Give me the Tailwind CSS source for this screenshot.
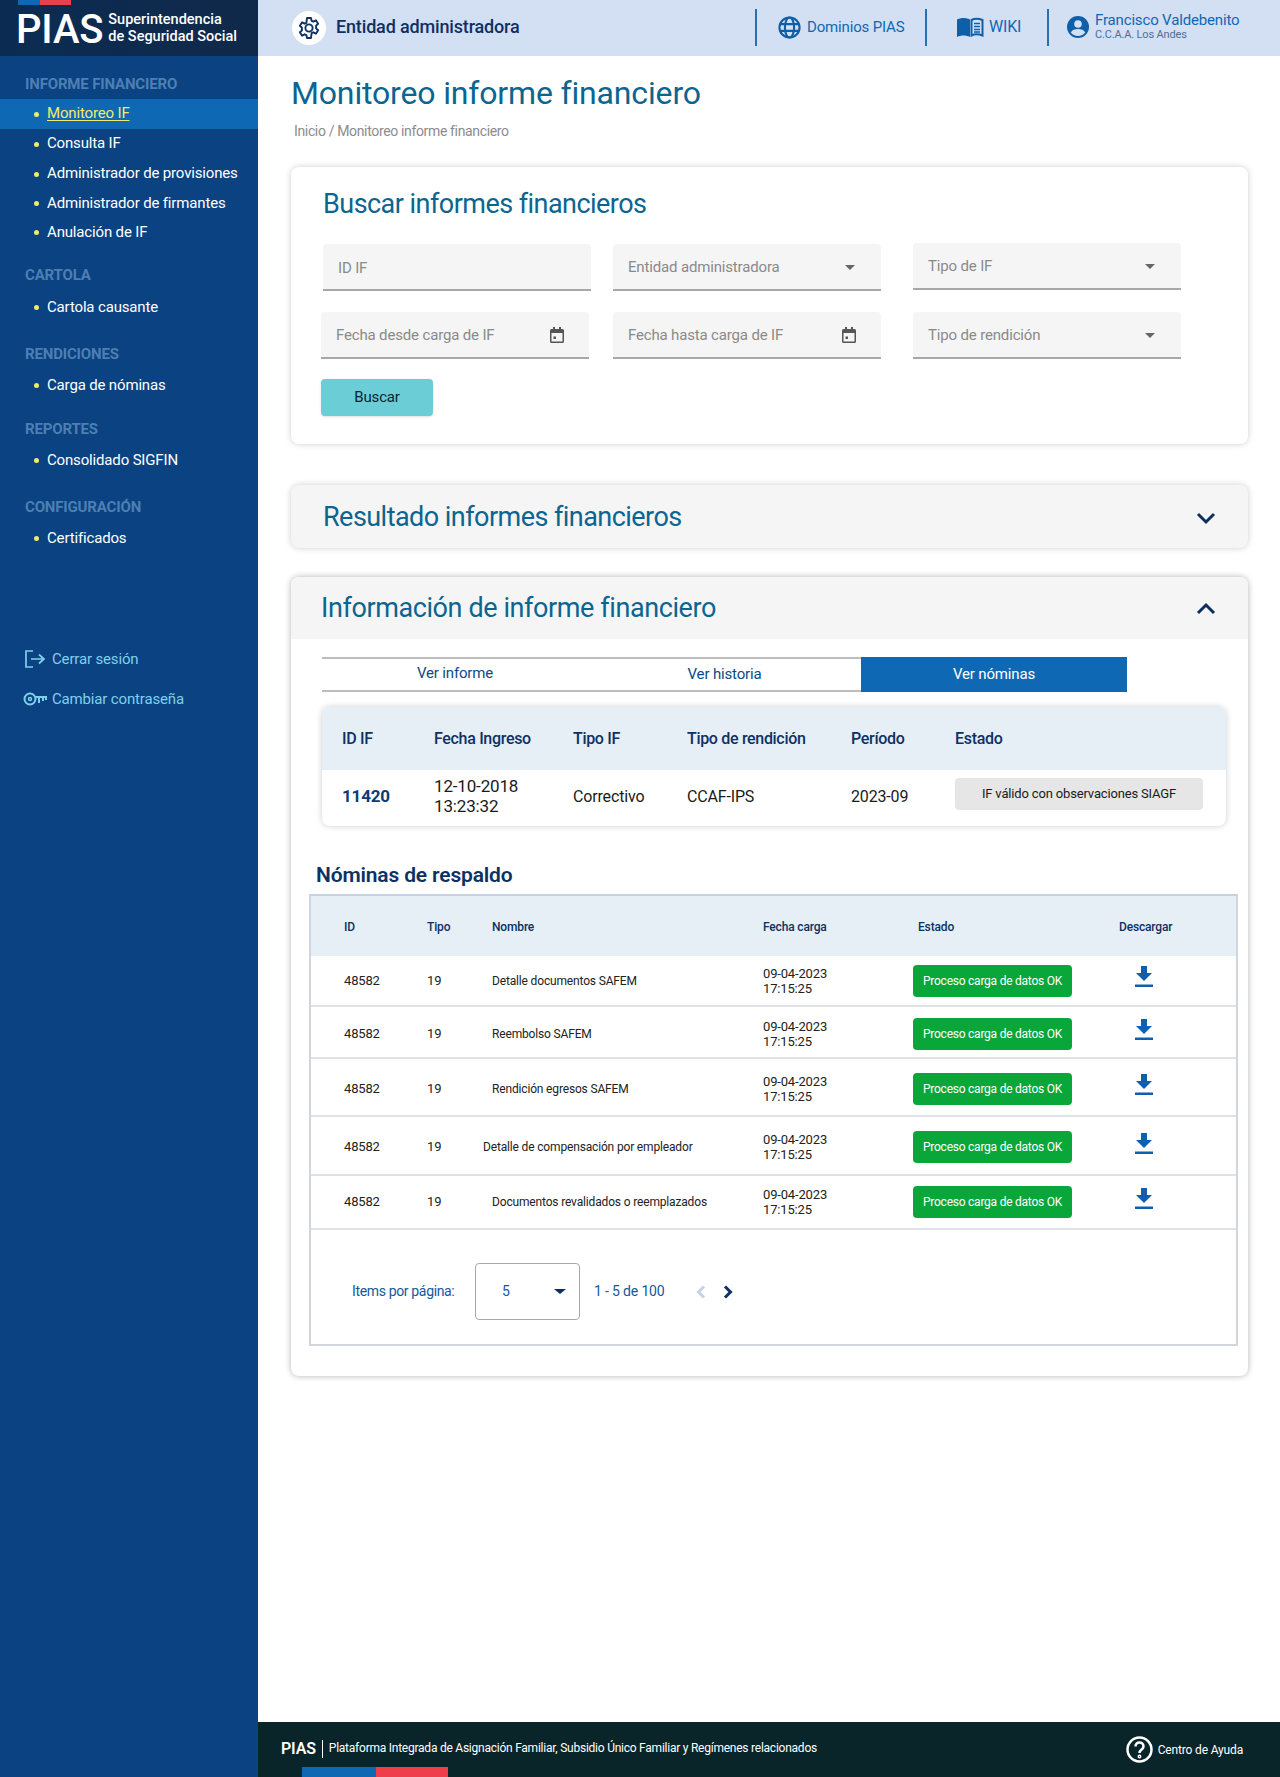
<!DOCTYPE html>
<html lang="es">
<head>
<meta charset="utf-8">
<title>PIAS</title>
<script src="https://cdn.jsdelivr.net/npm/@tailwindcss/browser@4"></script>
</head>
<body class="font-['Roboto',sans-serif] bg-white">
<div class="flex w-[1280px] h-[1777px] tracking-[-0.01em]">
  <aside class="w-[258px] shrink-0 bg-[#0a4282] flex flex-col text-white">
    <div class="relative h-[56px] bg-gradient-to-r from-[#0b2c52] to-[#10294a] flex items-center pl-[16px] gap-[5px]">
      <div class="absolute left-[18px] top-0 flex h-[5px]"><div class="w-[22px] bg-[#0f68b4]"></div><div class="w-[31px] bg-[#e8414c]"></div></div>
      <span class="text-[40px] font-medium leading-none mt-[3px]">PIAS</span>
      <div class="text-[14.5px] font-medium leading-[17px] -mt-[1px] tracking-normal"><div>Superintendencia</div><div>de Seguridad Social</div></div>
    </div>
    <div class="h-[28px] mt-[14px] pl-[25px] flex items-center text-[15px] font-bold text-[#4d7fb3]">INFORME FINANCIERO</div>
    <div class="h-[30px] mt-[1px] bg-[#0f68b4] flex items-center pl-[34px] gap-[8px] text-[15px] text-[#f2ea6d]"><span class="w-[5px] h-[5px] rounded-full bg-[#f2ea6d]"></span><span class="underline underline-offset-2 -mt-[1px]">Monitoreo IF</span></div>
    <div class="h-[30px] flex items-center pl-[34px] gap-[8px] text-[15px]"><span class="w-[5px] h-[5px] rounded-full bg-[#f2ea6d]"></span><span class="-mt-[1px]">Consulta IF</span></div>
    <div class="h-[30px] flex items-center pl-[34px] gap-[8px] text-[15px]"><span class="w-[5px] h-[5px] rounded-full bg-[#f2ea6d]"></span><span class="-mt-[1px]">Administrador de provisiones</span></div>
    <div class="h-[29px] flex items-center pl-[34px] gap-[8px] text-[15px]"><span class="w-[5px] h-[5px] rounded-full bg-[#f2ea6d]"></span><span class="-mt-[1px]">Administrador de firmantes</span></div>
    <div class="h-[29px] flex items-center pl-[34px] gap-[8px] text-[15px]"><span class="w-[5px] h-[5px] rounded-full bg-[#f2ea6d]"></span><span class="-mt-[1px]">Anulación de IF</span></div>
    <div class="h-[28px] mt-[14px] pl-[25px] flex items-center text-[15px] font-bold text-[#4d7fb3]">CARTOLA</div>
    <div class="h-[30px] mt-[3px] flex items-center pl-[34px] gap-[8px] text-[15px]"><span class="w-[5px] h-[5px] rounded-full bg-[#f2ea6d]"></span>Cartola causante</div>
    <div class="h-[28px] mt-[18px] pl-[25px] flex items-center text-[15px] font-bold text-[#4d7fb3]">RENDICIONES</div>
    <div class="h-[30px] mt-[2px] flex items-center pl-[34px] gap-[8px] text-[15px]"><span class="w-[5px] h-[5px] rounded-full bg-[#f2ea6d]"></span>Carga de nóminas</div>
    <div class="h-[28px] mt-[15px] pl-[25px] flex items-center text-[15px] font-bold text-[#4d7fb3]">REPORTES</div>
    <div class="h-[30px] mt-[2px] flex items-center pl-[34px] gap-[8px] text-[15px]"><span class="w-[5px] h-[5px] rounded-full bg-[#f2ea6d]"></span>Consolidado SIGFIN</div>
    <div class="h-[28px] mt-[18px] pl-[25px] flex items-center text-[15px] font-bold text-[#4d7fb3]">CONFIGURACIÓN</div>
    <div class="h-[30px] mt-[2px] flex items-center pl-[34px] gap-[8px] text-[15px]"><span class="w-[5px] h-[5px] rounded-full bg-[#f2ea6d]"></span>Certificados</div>
    <div class="h-[30px] mt-[91px] flex items-center pl-[24px] gap-[6px] text-[15px] text-[#7fd0ea]">
      <svg class="w-[22px] h-[20px]" viewBox="0 0 22 20" fill="none" stroke="#7fd0ea" stroke-width="1.700"><path d="M9 2H2v16h7M7 10h13M15 5.500l5 4.500-5 4.500"/></svg>
      <span>Cerrar sesión</span>
    </div>
    <div class="h-[30px] mt-[10px] flex items-center pl-[23px] gap-[5px] text-[15px] text-[#7fd0ea]">
      <svg class="w-[24px] h-[16px]" viewBox="0 0 24 16" fill="none" stroke="#7fd0ea" stroke-width="2"><circle cx="7" cy="8" r="5.500"/><circle cx="7" cy="8" r="1.500" stroke-width="1.500"/><path d="M12.500 6H23v3M16 6v6M20 6v4"/></svg>
      <span>Cambiar contraseña</span>
    </div>
  </aside>

  <div class="flex-1 flex flex-col min-w-0">
    <header class="h-[56px] bg-[#d3dff2] flex items-center pl-[34px] shrink-0">
      <div class="-mt-[1px] w-[34px] h-[34px] rounded-full bg-white flex items-center justify-center">
        <svg class="w-[24px] h-[24px]" viewBox="0 0 24 24" fill="none" stroke="#0d3163" stroke-width="1.900" stroke-linejoin="round"><path d="M10 2h4l.6 2.900 1.700.8 2.600-1.400 2.200 3.400-2 1.900v2.800l2 1.900-2.200 3.400-2.600-1.400-1.700.8L14 22h-4l-.6-2.900-1.700-.8-2.600 1.400-2.200-3.400 2-1.900V11.600l-2-1.900L5.100 6.300l2.600 1.400 1.700-.8z"/><circle cx="12" cy="12" r="3.600"/></svg>
      </div>
      <span class="-mt-[4px] ml-[10px] text-[18px] font-medium text-[#0d3163]">Entidad administradora</span>
      <div class="ml-auto flex items-center h-full">
        <div class="w-[2px] h-[37px] -mt-[1px] bg-[#2a6fae]"></div>
        <div class="-mt-[2px] w-[168px] flex items-center pl-[21px] gap-[6px] text-[#0f68b4] text-[15px]">
          <svg class="w-[23px] h-[23px]" viewBox="0 0 24 24" fill="none" stroke="#0f5fa8" stroke-width="2.200"><circle cx="12" cy="12" r="10.500"/><ellipse cx="12" cy="12" rx="4.800" ry="10.500"/><path d="M2 8.500h20M2 15.500h20"/></svg>
          <span>Dominios PIAS</span>
        </div>
        <div class="w-[2px] h-[37px] -mt-[1px] bg-[#2a6fae]"></div>
        <div class="-mt-[2px] w-[120px] flex items-center pl-[30px] gap-[5px] text-[#0f68b4] text-[16px]">
          <svg class="w-[27px] h-[21px]" viewBox="0 0 27 21"><path fill="#0f5fa8" d="M0 2.500C4 .5 9 .5 13 2.500V20C9 18 4 18 0 20z"/><path fill="none" stroke="#0f5fa8" stroke-width="2" d="M14.500 3c3-1.500 7-1.500 11 0v15.500c-4-1.500-8-1.500-11 0z"/><path stroke="#0f5fa8" stroke-width="1.400" d="M17 6.500h6M17 9.500h6M17 12.500h6M17 15h6"/></svg>
          <span>WIKI</span>
        </div>
        <div class="w-[2px] h-[37px] -mt-[1px] bg-[#2a6fae]"></div>
        <div class="-mt-[2px] w-[231px] flex items-center pl-[18px] gap-[6px] text-[#0f68b4]">
          <svg class="w-[22px] h-[22px] shrink-0" viewBox="0 0 22 22"><circle cx="11" cy="11" r="11" fill="#0f5fa8"/><circle cx="11" cy="8" r="3.800" fill="#d3dff2"/><path fill="#d3dff2" d="M3.800 16.500c1.500-2.800 4-3.500 7.200-3.500s5.700.7 7.200 3.500C16.500 18.800 14 20 11 20s-5.500-1.200-7.200-3.500z"/></svg>
          <div class="leading-none -mt-[2px]"><div class="text-[15px] leading-[17px]">Francisco Valdebenito</div><div class="text-[11px] leading-[11px] text-[#4d6f98]">C.C.A.A. Los Andes</div></div>
        </div>
      </div>
    </header>

    <main class="flex-1 pl-[33px] pr-[32px] min-h-0">
      <h1 class="text-[32px] leading-[44px] mt-[15px] text-[#0b6590]">Monitoreo informe financiero</h1>
      <p class="text-[14px] tracking-[-0.025em] leading-[20px] mt-[6px] ml-[3px] text-[#8c8c8c]">Inicio / Monitoreo informe financiero</p>

      <section class="mt-[26px] h-[277px] bg-white rounded-lg shadow-[0_0_6px_rgba(0,0,0,0.2)] pt-[19px] pl-[30px]">
        <h2 class="ml-[2px] text-[27px] tracking-[-0.02em] leading-[36px] text-[#0b6590]">Buscar informes financieros</h2>
        <div class="mt-[22px] flex items-start">
          <div class="ml-[2px] w-[268px] h-[47px] bg-[#f5f5f5] border-b-2 border-[#a8a8a8] rounded-t flex items-center pt-[3px] px-[15px] text-[15px] text-[#8a8a8a]">ID IF</div>
          <div class="ml-[22px] w-[268px] h-[47px] bg-[#f5f5f5] border-b-2 border-[#a8a8a8] rounded-t flex items-center justify-between pt-[1px] pl-[15px] pr-[26px] text-[15px] text-[#8a8a8a]">Entidad administradora<span class="w-0 h-0 border-x-[5px] border-x-transparent border-t-[5px] border-t-[#666]"></span></div>
          <div class="ml-[32px] -mt-[1px] w-[268px] h-[47px] bg-[#f5f5f5] border-b-2 border-[#a8a8a8] rounded-t flex items-center justify-between pt-[1px] pl-[15px] pr-[26px] text-[15px] text-[#8a8a8a]">Tipo de IF<span class="w-0 h-0 border-x-[5px] border-x-transparent border-t-[5px] border-t-[#666]"></span></div>
        </div>
        <div class="mt-[21px] flex items-start">
          <div class="w-[268px] h-[47px] bg-[#f5f5f5] border-b-2 border-[#a8a8a8] rounded-t flex items-center justify-between pt-[1px] pl-[15px] pr-[25px] text-[15px] text-[#8a8a8a]">Fecha desde carga de IF
            <svg class="w-[14px] h-[16px]" viewBox="0 0 14 16"><path fill="#555" d="M3 0h2v2h4V0h2v2h1.500A1.500 1.500 0 0 1 14 3.500v11a1.500 1.500 0 0 1-1.500 1.500h-11A1.500 1.500 0 0 1 0 14.500v-11A1.500 1.500 0 0 1 1.500 2H3zM1.500 6v8.500h11V6z"/><rect x="3.500" y="9.500" width="2.500" height="2.500" fill="#555"/></svg>
          </div>
          <div class="ml-[24px] w-[268px] h-[47px] bg-[#f5f5f5] border-b-2 border-[#a8a8a8] rounded-t flex items-center justify-between pt-[1px] pl-[15px] pr-[25px] text-[15px] text-[#8a8a8a]">Fecha hasta carga de IF
            <svg class="w-[14px] h-[16px]" viewBox="0 0 14 16"><path fill="#555" d="M3 0h2v2h4V0h2v2h1.500A1.500 1.500 0 0 1 14 3.500v11a1.500 1.500 0 0 1-1.500 1.500h-11A1.500 1.500 0 0 1 0 14.500v-11A1.500 1.500 0 0 1 1.500 2H3zM1.500 6v8.500h11V6z"/><rect x="3.500" y="9.500" width="2.500" height="2.500" fill="#555"/></svg>
          </div>
          <div class="ml-[32px] w-[268px] h-[47px] bg-[#f5f5f5] border-b-2 border-[#a8a8a8] rounded-t flex items-center justify-between pt-[1px] pl-[15px] pr-[26px] text-[15px] text-[#8a8a8a]">Tipo de rendición<span class="w-0 h-0 border-x-[5px] border-x-transparent border-t-[5px] border-t-[#666]"></span></div>
        </div>
        <button class="mt-[20px] w-[112px] h-[37px] rounded bg-[#6bcdd6] text-[15px] text-[#0b1f33] shadow-sm">Buscar</button>
      </section>

      <section class="mt-[41px] h-[63px] bg-[#f5f5f5] rounded-lg shadow-[0_0_6px_rgba(0,0,0,0.2)] flex items-center justify-between pl-[32px] pr-[32px]">
        <h2 class="text-[27px] tracking-[-0.02em] leading-[36px] text-[#0b6590]">Resultado informes financieros</h2>
        <svg class="w-[20px] h-[13px] mt-[4px]" viewBox="0 0 20 13" fill="none" stroke="#0d2f5c" stroke-width="3"><path d="M2 2l8 8 8-8"/></svg>
      </section>

      <section class="mt-[29px] h-[799px] bg-white rounded-lg shadow-[0_0_6px_rgba(0,0,0,0.3)]">
        <div class="h-[62px] bg-[#f5f5f5] rounded-t-lg flex items-center justify-between pl-[30px] pr-[32px]">
          <h2 class="text-[27px] tracking-[-0.015em] leading-[36px] text-[#0b6590]">Información de informe financiero</h2>
          <svg class="w-[20px] h-[13px]" viewBox="0 0 20 13" fill="none" stroke="#0d2f5c" stroke-width="3"><path d="M2 11l8-8 8 8"/></svg>
        </div>

        <div class="mt-[18px] ml-[31px] w-[805px] h-[35px] flex text-[15px] text-[#0d4a85]">
          <div class="w-[266px] flex items-center justify-center border-y-2 border-[#bdbdbd]"><span class="-mt-[2px]">Ver informe</span></div>
          <div class="w-[273px] flex items-center justify-center border-y-2 border-[#bdbdbd]">Ver historia</div>
          <div class="w-[266px] flex items-center justify-center bg-[#0f68b4] text-white">Ver nóminas</div>
        </div>

        <div class="mt-[15px] ml-[31px] w-[904px] h-[119px] rounded-lg shadow-[0_0_6px_rgba(0,0,0,0.2)] overflow-hidden">
          <div class="h-[63px] bg-[#e6eef6] grid grid-cols-[112px_139px_114px_164px_104px_1fr] items-center text-[16px] tracking-[-0.02em] font-medium text-[#0d3163]">
            <div class="pl-[20px]">ID IF</div><div>Fecha Ingreso</div><div>Tipo IF</div><div>Tipo de rendición</div><div>Período</div><div>Estado</div>
          </div>
          <div class="h-[56px] pb-[2px] grid grid-cols-[112px_139px_114px_164px_104px_1fr] items-center text-[16px] text-[#1a1a1a]">
            <div class="pl-[20px] text-[17px] font-bold text-[#0e3a78]">11420</div>
            <div class="text-[17px] leading-[20px] -mt-[2px]">12-10-2018<br>13:23:32</div>
            <div>Correctivo</div><div>CCAF-IPS</div><div>2023-09</div>
            <div class="w-[248px] h-[32px] -mt-[6px] rounded bg-[#e6e6e6] flex items-center justify-center text-[13px]">IF válido con observaciones SIAGF</div>
          </div>
        </div>

        <h3 class="mt-[35px] ml-[25px] text-[21px] leading-[28px] font-semibold text-[#0d3163]">Nóminas de respaldo</h3>

        <div class="mt-[5px] ml-[18px] w-[929px] h-[452px] border-2 border-[#d0d6dc] border-t-[#c5d3e0]">
          <div class="h-[60px] pt-[1px] bg-[#e6eef6] grid grid-cols-[116px_65px_271px_150px_206px_1fr] items-center text-[12px] font-medium text-[#0d3163]">
            <div class="pl-[33px]">ID</div><div>Tipo</div><div>Nombre</div><div>Fecha carga</div><div class="pl-[5px]">Estado</div><div>Descargar</div>
          </div>

          <div class="h-[51px] border-b-2 border-[#dfe3e6] grid grid-cols-[116px_65px_271px_150px_206px_1fr] items-center text-[12px] text-[#222]">
            <div class="pl-[33px] text-[13px]">48582</div><div class="text-[13px]">19</div><div>Detalle documentos SAFEM</div><div class="text-[13px] leading-[15px]">09-04-2023<br>17:15:25</div>
            <div class="w-[159px] h-[32px] rounded bg-[#09a63a] text-white tracking-[-0.02em] flex items-center justify-center">Proceso carga de datos OK</div>
            <svg class="ml-[16px] -mt-[8px] w-[18px] h-[21px]" viewBox="0 0 18 21"><path fill="#0f5fb0" d="M6 0h6v7h5l-8 8-8-8h5z"/><rect y="18.500" width="18" height="2.500" fill="#0f5fb0"/></svg>
          </div>
          <div class="h-[52px] pt-[3px] border-b-2 border-[#dfe3e6] grid grid-cols-[116px_65px_271px_150px_206px_1fr] items-center text-[12px] text-[#222]">
            <div class="pl-[33px] text-[13px]">48582</div><div class="text-[13px]">19</div><div>Reembolso SAFEM</div><div class="text-[13px] leading-[15px]">09-04-2023<br>17:15:25</div>
            <div class="w-[159px] h-[32px] rounded bg-[#09a63a] text-white tracking-[-0.02em] flex items-center justify-center">Proceso carga de datos OK</div>
            <svg class="ml-[16px] -mt-[8px] w-[18px] h-[21px]" viewBox="0 0 18 21"><path fill="#0f5fb0" d="M6 0h6v7h5l-8 8-8-8h5z"/><rect y="18.500" width="18" height="2.500" fill="#0f5fb0"/></svg>
          </div>
          <div class="h-[58px] pt-[3px] border-b-2 border-[#dfe3e6] grid grid-cols-[116px_65px_271px_150px_206px_1fr] items-center text-[12px] text-[#222]">
            <div class="pl-[33px] text-[13px]">48582</div><div class="text-[13px]">19</div><div>Rendición egresos SAFEM</div><div class="text-[13px] leading-[15px]">09-04-2023<br>17:15:25</div>
            <div class="w-[159px] h-[32px] rounded bg-[#09a63a] text-white tracking-[-0.02em] flex items-center justify-center">Proceso carga de datos OK</div>
            <svg class="ml-[16px] -mt-[8px] w-[18px] h-[21px]" viewBox="0 0 18 21"><path fill="#0f5fb0" d="M6 0h6v7h5l-8 8-8-8h5z"/><rect y="18.500" width="18" height="2.500" fill="#0f5fb0"/></svg>
          </div>
          <div class="h-[59px] pt-[3px] border-b-2 border-[#dfe3e6] grid grid-cols-[116px_65px_271px_150px_206px_1fr] items-center text-[12px] text-[#222]">
            <div class="pl-[33px] text-[13px]">48582</div><div class="text-[13px]">19</div><div class="-ml-[9px]">Detalle de compensación por empleador</div><div class="text-[13px] leading-[15px]">09-04-2023<br>17:15:25</div>
            <div class="w-[159px] h-[32px] rounded bg-[#09a63a] text-white tracking-[-0.02em] flex items-center justify-center">Proceso carga de datos OK</div>
            <svg class="ml-[16px] -mt-[8px] w-[18px] h-[21px]" viewBox="0 0 18 21"><path fill="#0f5fb0" d="M6 0h6v7h5l-8 8-8-8h5z"/><rect y="18.500" width="18" height="2.500" fill="#0f5fb0"/></svg>
          </div>
          <div class="h-[54px] border-b-2 border-[#dfe3e6] grid grid-cols-[116px_65px_271px_150px_206px_1fr] items-center text-[12px] text-[#222]">
            <div class="pl-[33px] text-[13px]">48582</div><div class="text-[13px]">19</div><div>Documentos revalidados o reemplazados</div><div class="text-[13px] leading-[15px]">09-04-2023<br>17:15:25</div>
            <div class="w-[159px] h-[32px] rounded bg-[#09a63a] text-white tracking-[-0.02em] flex items-center justify-center">Proceso carga de datos OK</div>
            <svg class="ml-[16px] -mt-[8px] w-[18px] h-[21px]" viewBox="0 0 18 21"><path fill="#0f5fb0" d="M6 0h6v7h5l-8 8-8-8h5z"/><rect y="18.500" width="18" height="2.500" fill="#0f5fb0"/></svg>
          </div>

          <div class="pt-[33px] flex items-center text-[14px] text-[#0f5a9c] pl-[41px]">
            <span class="w-[123px] whitespace-nowrap tracking-[-0.025em]">Items por página:</span>
            <div class="w-[105px] h-[57px] border-[1.5px] border-[#a8a8a8] rounded flex items-center justify-between pl-[26px] pr-[13px] text-[#0f5a9c]">5<span class="w-0 h-0 border-x-[6px] border-x-transparent border-t-[5px] border-t-[#0d2f5c]"></span></div>
            <span class="ml-[14px] w-[100px]">1 - 5 de 100</span>
            <svg class="ml-[1px] w-[12px] h-[14px]" viewBox="0 0 12 14" fill="none" stroke="#c5d3e6" stroke-width="3"><path d="M9 1.500L3.500 7 9 12.500"/></svg>
            <svg class="ml-[15px] w-[12px] h-[14px]" viewBox="0 0 12 14" fill="none" stroke="#0d3163" stroke-width="3"><path d="M3 1.500L8.500 7 3 12.500"/></svg>
          </div>
        </div>
      </section>
    </main>

    <footer class="h-[55px] bg-[#0a2529] relative shrink-0 flex items-center pl-[23px] text-white">
      <span class="-mt-[1px] text-[16px] font-semibold">PIAS</span>
      <span class="ml-[6px] -mt-[2px] w-[1px] h-[18px] bg-white"></span>
      <span class="ml-[6px] -mt-[4px] text-[12px] tracking-[-0.02em]">Plataforma Integrada de Asignación Familiar, Subsidio Único Familiar y Regímenes relacionados</span>
      <div class="absolute left-[44px] bottom-0 flex h-[10px]"><div class="w-[74px] bg-[#0f68b4]"></div><div class="w-[72px] bg-[#ef3e4a]"></div></div>
      <div class="ml-auto mr-[37px] flex items-center gap-[5px] text-[12px]">
        <svg class="w-[27px] h-[27px]" viewBox="0 0 27 27" fill="none" stroke="#fff" stroke-width="2.500"><circle cx="13.500" cy="13.500" r="12"/><path d="M9.500 10.500c0-5.500 8-5.500 8 0 0 3-4 3-4 6.500"/><circle cx="13.500" cy="20.500" r="0.700"/></svg>
        Centro de Ayuda
      </div>
    </footer>
  </div>
</div>
</body>
</html>
